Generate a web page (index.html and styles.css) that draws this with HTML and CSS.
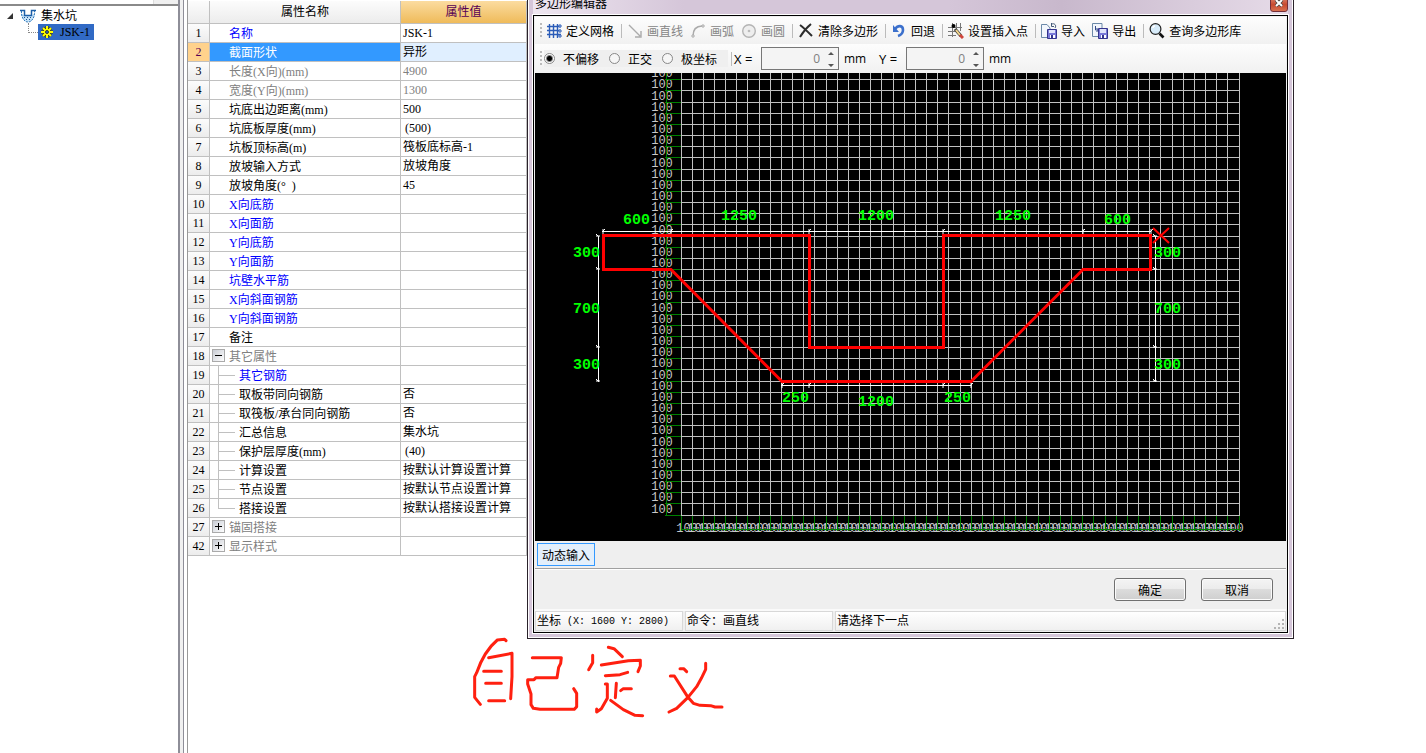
FILE: index.html
```html
<!DOCTYPE html>
<html lang="zh-CN">
<head>
    <meta charset="UTF-8">
    <meta name="viewport" content="width=device-width, initial-scale=1.0">
    <title>集水坑</title>
    <link rel="stylesheet" href="styles.css">
</head>
<body>
    <div class="workspace">
        <aside class="tree-pane">
            <div class="tree-tab"></div>
            <ul class="tree">
                <li class="tree-row">
                    <svg class="arrow" viewBox="0 0 8 8"><path d="M7 1V7H1Z" fill="#333"/></svg>
                    <svg class="node-icon" viewBox="0 0 18 16">
                        <path d="M2 5C2 9 5 14 9 14C13 14 16 9 16 5L12 8H6Z" fill="#c4e2f8"/>
                        <path d="M1 2.500H5.500V7.500H12.500V2.500H17" fill="none" stroke="#1c5fa8" stroke-width="1.5"/>
                        <path d="M2.500 3C2 9 5 14 9 14C13 14 16 9 15.500 3" fill="none" stroke="#2d76ba" stroke-dasharray="2 1"/>
                        <path d="M5 9.500h1M8 9.500h1M11 9.500h1M7 11.500h1M10 11.500h1" stroke="#1c4f90"/>
                    </svg>
                    <span>集水坑</span>
                </li>
                <li class="tree-row child">
                    <a class="selected" href="#">
                        <svg class="sun" viewBox="0 0 14 14">
                            <path d="M7 1V13M1 7H13M3 3L11 11M11 3L3 11" stroke="#3a3000" stroke-width="3"/>
                            <path d="M7 1V13M1 7H13M3 3L11 11M11 3L3 11" stroke="#ff0" stroke-width="2"/>
                            <circle cx="7" cy="7" r="3" fill="#ff0"/>
                            <circle cx="7" cy="7" r="1.5" fill="#316ac5" stroke="#333"/>
                        </svg>
                        <span>JSK-1</span>
                    </a>
                </li>
            </ul>
        </aside>
        <div class="splitter"></div>

        <table class="props">
            <thead>
                <tr><th class="num"></th><th class="name">属性名称</th><th class="value">属性值</th></tr>
            </thead>
            <tbody>
                <tr><th>1</th><td class="blue">名称</td><td>JSK-1</td></tr>
                <tr class="current"><th>2</th><td>截面形状</td><td>异形</td></tr>
                <tr class="gray"><th>3</th><td>长度(X向)(mm)</td><td>4900</td></tr>
                <tr class="gray"><th>4</th><td>宽度(Y向)(mm)</td><td>1300</td></tr>
                <tr><th>5</th><td>坑底出边距离(mm)</td><td>500</td></tr>
                <tr><th>6</th><td>坑底板厚度(mm)</td><td class="auto">(500)</td></tr>
                <tr><th>7</th><td>坑板顶标高(m)</td><td>筏板底标高-1</td></tr>
                <tr><th>8</th><td>放坡输入方式</td><td>放坡角度</td></tr>
                <tr><th>9</th><td>放坡角度(°&nbsp; )</td><td>45</td></tr>
                <tr><th>10</th><td class="blue">X向底筋</td><td></td></tr>
                <tr><th>11</th><td class="blue">X向面筋</td><td></td></tr>
                <tr><th>12</th><td class="blue">Y向底筋</td><td></td></tr>
                <tr><th>13</th><td class="blue">Y向面筋</td><td></td></tr>
                <tr><th>14</th><td class="blue">坑壁水平筋</td><td></td></tr>
                <tr><th>15</th><td class="blue">X向斜面钢筋</td><td></td></tr>
                <tr><th>16</th><td class="blue">Y向斜面钢筋</td><td></td></tr>
                <tr><th>17</th><td>备注</td><td></td></tr>
                <tr class="gray group"><th>18</th><td><button class="toggle open" aria-label="折叠"></button>其它属性</td><td></td></tr>
                <tr class="sub"><th>19</th><td class="blue">其它钢筋</td><td></td></tr>
                <tr class="sub"><th>20</th><td>取板带同向钢筋</td><td>否</td></tr>
                <tr class="sub"><th>21</th><td>取筏板/承台同向钢筋</td><td>否</td></tr>
                <tr class="sub"><th>22</th><td>汇总信息</td><td>集水坑</td></tr>
                <tr class="sub"><th>23</th><td>保护层厚度(mm)</td><td class="auto">(40)</td></tr>
                <tr class="sub"><th>24</th><td>计算设置</td><td>按默认计算设置计算</td></tr>
                <tr class="sub"><th>25</th><td>节点设置</td><td>按默认节点设置计算</td></tr>
                <tr class="sub last"><th>26</th><td>搭接设置</td><td>按默认搭接设置计算</td></tr>
                <tr class="gray group"><th>27</th><td><button class="toggle" aria-label="展开"></button>锚固搭接</td><td></td></tr>
                <tr class="gray group"><th>42</th><td><button class="toggle" aria-label="展开"></button>显示样式</td><td></td></tr>
            </tbody>
        </table>

        <section class="dialog">
            <header class="titlebar">
                <span>多边形编辑器</span>
                <button class="close" aria-label="关闭">
                    <svg viewBox="0 0 8 8"><path d="M1 1L7 7M7 1L1 7" stroke="#444" stroke-width="3.4"/><path d="M1 1L7 7M7 1L1 7" stroke="#fff" stroke-width="2"/></svg>
                </button>
            </header>
            <div class="dialog-body">
                <div class="toolbar">
                    <i class="grip"></i>
                    <button class="tool">
                        <svg viewBox="0 0 16 16"><path d="M3.5 1V15M7.5 1V15M11.5 1V15M1 3.5H15M1 7.5H15M1 11.5H15" stroke="#2b5cb8" stroke-width="1.4" fill="none"/><path d="M13 2h2v2h-2zM13 7h2v2h-2zM13 12h2v2h-2z" fill="#fff" stroke="#2b5cb8"/></svg>
                        定义网格
                    </button>
                    <i class="sep"></i>
                    <button class="tool" disabled>
                        <svg viewBox="0 0 16 16"><path d="M2 2L13 13M14 8V14H8" fill="none" stroke="#aaa" stroke-width="1.4"/></svg>
                        画直线
                    </button>
                    <button class="tool" disabled>
                        <svg viewBox="0 0 16 16"><path d="M3 13C3 7 6 3 12 3" fill="none" stroke="#aaa" stroke-width="1.4"/><path d="M2 12h2v2h-2zM12 2h2v2h-2z" fill="#fff" stroke="#aaa"/></svg>
                        画弧
                    </button>
                    <button class="tool" disabled>
                        <svg viewBox="0 0 16 16"><circle cx="8" cy="8" r="6.3" fill="#eee" stroke="#b4b4b4" stroke-width="1.4"/><circle cx="8" cy="8" r="1.3" fill="#bbb"/></svg>
                        画圆
                    </button>
                    <i class="sep"></i>
                    <button class="tool">
                        <svg viewBox="0 0 16 16"><path d="M2 2C6 5 10 9 14 13M13 1C8 5 5 9 2 14" fill="none" stroke="#2c2c2c" stroke-width="2"/></svg>
                        清除多边形
                    </button>
                    <i class="sep"></i>
                    <button class="tool">
                        <svg viewBox="0 0 16 16"><path d="M4 6C7 2 12 2 12 7C12 10 10 12 7 13" fill="none" stroke="#3c70cc" stroke-width="2.6"/><path d="M2 2V9H8Z" fill="#3c70cc"/></svg>
                        回退
                    </button>
                    <i class="sep"></i>
                    <button class="tool">
                        <svg viewBox="0 0 16 16"><path d="M4.5 0V14M8.500 0V9M12.500 0V8M0 4.500H14M0 8.500H9M0 12.500H8" stroke="#777" fill="none"/><circle cx="5.500" cy="3" r="2" fill="#000"/><path d="M7 6L13 13" stroke="#444" stroke-width="3.400"/><path d="M8 7L12 12" stroke="#f4d58a" stroke-width="2"/><path d="M12 12L15 15" stroke="#d0453c" stroke-width="3"/></svg>
                        设置插入点
                    </button>
                    <i class="sep"></i>
                    <button class="tool">
                        <svg viewBox="0 0 16 16"><path d="M.5 1.500H6L9 5V14.500H.5Z" fill="#f2f6fc" stroke="#6c89a8"/><path d="M11 1C13 0 16 2 14 5M10.500 0V3.500H13" fill="none" stroke="#445a78"/><path d="M6.500 6.500H15.500V15.500H6.500Z" fill="#7a7ad8" stroke="#34348c"/><path d="M8 7h6v3H8z" fill="#dfe3fa"/><path d="M9 12h5v3H9z" fill="#fff"/><path d="M10 12h2v3h-2z" fill="#34348c"/></svg>
                        导入
                    </button>
                    <button class="tool">
                        <svg viewBox="0 0 16 16"><path d="M.5 .5H10V13.500H.5Z" fill="#f2f6fc" stroke="#6c89a8"/><path d="M3.500 3V7H6M4.500 5L6.500 7L4.500 9" fill="none" stroke="#334a88"/><path d="M6.500 5.500H15.500V15.500H6.500Z" fill="#7a7ad8" stroke="#34348c"/><path d="M8 6h6v4H8z" fill="#dfe3fa"/><path d="M9 12h5v3H9z" fill="#fff"/><path d="M10 12h2v3h-2z" fill="#34348c"/></svg>
                        导出
                    </button>
                    <i class="sep"></i>
                    <button class="tool">
                        <svg viewBox="0 0 16 16"><circle cx="6.500" cy="6" r="5.400" fill="#d8ecfa" stroke="#222" stroke-width="1.200"/><path d="M4 5C4 4 5 3 6 3" stroke="#fff" fill="none" stroke-width="1.500"/><path d="M10.500 10.500L14.500 14.500" stroke="#111" stroke-width="2.600"/></svg>
                        查询多边形库
                    </button>
                </div>

                <div class="toolbar offset-bar">
                    <i class="grip"></i>
                    <div class="modes">
                        <label><input type="radio" name="offset" checked>不偏移</label>
                        <label><input type="radio" name="offset">正交</label>
                        <label><input type="radio" name="offset">极坐标</label>
                    </div>
                    <i class="sep"></i>
                    <label class="axis" for="offsetX">X =</label>
                    <div class="spin">
                        <input type="text" id="offsetX" value="0" disabled>
                        <svg viewBox="0 0 8 16"><path d="M1 4L4 1L7 4ZM1 13L4 16L7 13Z" fill="#555"/></svg>
                    </div>
                    <span class="unit">mm</span>
                    <label class="axis" for="offsetY">Y =</label>
                    <div class="spin">
                        <input type="text" id="offsetY" value="0" disabled>
                        <svg viewBox="0 0 8 16"><path d="M1 4L4 1L7 4ZM1 13L4 16L7 13Z" fill="#555"/></svg>
                    </div>
                    <span class="unit">mm</span>
                </div>

                <svg class="canvas" viewBox="535 73 751 468">
                    <g id="grid"></g>
                    <path class="dim-line" d="M603 231.500H1151M598.500 236V381M1155.500 236V381M782 385.500H971"/>
                    <g id="ticks"></g>
                    <g class="dim-text">
                        <text x="623" y="224">600</text>
                        <text x="721" y="220">1250</text>
                        <text x="858" y="220">1200</text>
                        <text x="995" y="220">1250</text>
                        <text x="1104" y="224">600</text>
                        <text x="573" y="257">300</text>
                        <text x="573" y="313">700</text>
                        <text x="573" y="369">300</text>
                        <text x="1154" y="257">300</text>
                        <text x="1154" y="313">700</text>
                        <text x="1154" y="369">300</text>
                        <text x="782" y="402">250</text>
                        <text x="858" y="406">1200</text>
                        <text x="944" y="402">250</text>
                    </g>
                    <path class="shape" d="M603.500 235.500H809.500V347.500H943.500V235.500H1150.500V269.500H1083L971 381.500H782L671 269.500H603.500Z"/>
                    <path class="cursor" d="M1153 228L1169 243M1169 228L1153 243"/>
                </svg>

                <div class="input-bar"><button class="dynamic">动态输入</button></div>
                <div class="actions">
                    <button>确定</button>
                    <button>取消</button>
                </div>
                <footer class="status">
                    <div class="cell">坐标<span class="coords">(X: 1600 Y: 2800)</span></div>
                    <div class="cell">命令：画直线</div>
                    <div class="cell wide">请选择下一点
                        <svg class="resize" viewBox="0 0 12 12"><path d="M9 1h2v2H9zM5 5h2v2H5zM9 5h2v2H9zM1 9h2v2H1zM5 9h2v2H5zM9 9h2v2H9z" fill="#b4b4b4"/></svg>
                    </div>
                </footer>
            </div>
        </section>
    </div>

    <!-- handwritten note: 自己定义 -->
    <svg class="note" viewBox="0 0 840 300">
        <path d="M138 32L134 28L112 30C88 50 66 82 50 128L44 140V202L61 223M86 83L156 70V140L152 206M71 124H124M77 160H124M86 212H134"/>
        <path d="M217 83H304L302 100L296 112L291 143H228L222 149H203V162L213 192V224L220 235L240 238H343L350 230V190L341 176"/>
        <path d="M398 76V98L386 119M445 52L462 56L487 80M424 105L505 92L541 91V108L534 125M436 137L480 134L503 127M436 162H442V205L424 236L410 246V237M469 160L466 203M482 182L490 176H514M452 211L490 239L525 256L548 257"/>
        <path d="M660 116L671 116L680 125M631 138L643 138L684 202L700 220L720 226L752 227L765 231H786M737 100V118L724 145L710 170L684 202L650 235L627 246"/>
    </svg>

    <script>
        // grid pitch in px, one cell = 100mm
        const PITCH = 11.16;
        const LEFT = 681, RIGHT = 1239, TOP = 73, BOTTOM = 515;
        const snap = v => Math.floor(v) + 0.5;

        let grid = '', axis = '', labels = '';
        for (let i = 0; i <= 50; i++) {
            const x = snap(LEFT + i * PITCH);
            grid += `M${x} ${TOP}V${BOTTOM}`;
            axis += `M${x} ${BOTTOM + 1}V531`;
            if (i < 50) labels += `<text x="${Math.round(x + 5)}" y="532">100</text>`;
        }
        for (let i = 0; i <= 39; i++) {
            const y = snap(BOTTOM - i * PITCH);
            grid += `M${LEFT} ${y}H${RIGHT + 1}`;
            axis += `M665 ${y}H${LEFT}`;
            labels += `<text x="662" y="${Math.floor(y - 2)}">100</text>`;
        }
        axis += `M666.5 ${TOP}V${BOTTOM}M${LEFT} 529.5H1241`;
        document.getElementById('grid').innerHTML =
            `<path class="grid-line" d="${grid}"/><g class="axis-text">${labels}</g><path class="axis-line" d="${axis}"/>`;

        // small arrow ticks on the dimension lines
        let ticks = '';
        [603, 671, 809, 943, 1083, 1151].forEach(x => ticks += `M${x} 229V234M${x - 1} 232L${x + 2} 229`);
        [782, 809, 943, 971].forEach(x => ticks += `M${x} 383V388M${x - 1} 386L${x + 2} 383`);
        [236, 269, 347, 381].forEach(y => {
            [598, 1155].forEach(x => ticks += `M${x - 2} ${y}H${x + 2}M${x - 2} ${y - 2}L${x + 1} ${y + 1}`);
        });
        document.getElementById('ticks').innerHTML = `<path class="dim-line" d="${ticks}"/>`;
    </script>
</body>
</html>
```

FILE: styles.css
```css
* {
    box-sizing: border-box;
}
body {
    margin: 0;
    min-height: 100vh;
    overflow: hidden;
    background: #fff;
    color: #000;
    font: 12px/18px "Liberation Serif", "Noto Sans CJK SC", serif;
}
button, input {
    font: inherit;
    color: inherit;
}
button {
    padding: 0;
    border: none;
    background: none;
}
.workspace {
    display: flex;
    height: 100vh;
    align-items: flex-start;
}

/* component tree */
.tree-pane {
    flex: 0 0 180px;
    height: 100%;
    border-right: 2px solid #8e8e98;
}
.tree-tab {
    height: 6px;
    border-bottom: 2px solid #8a8a8a;
    background: linear-gradient(90deg, #fff 153px, #ddd 153px, #ddd 154px, #f0f0f0 154px);
}
.tree {
    list-style: none;
    margin: 0;
    padding: 2px 0 0 6px;
}
.tree-row {
    display: flex;
    align-items: center;
    height: 16px;
}
.arrow {
    width: 8px;
    height: 8px;
    margin-right: 5px;
}
.node-icon {
    width: 18px;
    height: 16px;
    margin-right: 4px;
}
.child::before {
    content: "";
    width: 9px;
    height: 9px;
    margin: 0 0 8px 22px;
    border-left: 1px dotted #888;
    border-bottom: 1px dotted #888;
}
.selected {
    display: flex;
    align-items: center;
    gap: 6px;
    height: 16px;
    padding: 0 4px 0 2px;
    background: #316ac5;
    color: #000;
    text-decoration: none;
}
.sun {
    width: 14px;
    height: 14px;
}
.splitter {
    flex: 0 0 8px;
    height: 100%;
    border-right: 1px solid #999;
    background: linear-gradient(90deg, #f0f0f0 3px, #8e8e98 3px, #8e8e98 4px, #fff 4px);
}

/* property grid */
.props {
    flex: 0 0 339px;
    table-layout: fixed;
    border-collapse: separate;
    border-spacing: 0;
    border-top: 1px solid #fff;
}
.props th, .props td {
    height: 19px;
    padding: 0 0 0 2px;
    border: 0 solid silver;
    border-width: 0 1px 1px 0;
    font-weight: normal;
    line-height: 16px;
    white-space: nowrap;
    text-align: left;
}
.props th {
    padding: 0;
    background: linear-gradient(#fcfcfc, #ececec);
    text-align: center;
}
.props thead th {
    height: 23px;
}
.props .num {
    width: 22px;
}
.props .name {
    width: 191px;
}
.props thead .value {
    background: linear-gradient(#fbdca0, #efbb5a);
    color: #550055;
}
.props td:nth-child(2) {
    padding-top: 2px;
    padding-left: 19px;
}
.props .blue {
    color: #00f;
}
.props .gray td {
    color: #808080;
}
.props .auto {
    padding-left: 4px;
}
.props .current th {
    background: #ffd28c;
    color: #550055;
}
.props .current td {
    background: #e0efff;
}
.props .current td:nth-child(2) {
    background: #39f;
    color: #fff;
}
.props .group td:nth-child(2) {
    padding-left: 2px;
}
.toggle {
    width: 13px;
    height: 13px;
    margin-right: 4px;
    border: 1px solid #aaa;
    vertical-align: top;
    background:
        linear-gradient(#000, #000) center / 7px 1px no-repeat,
        linear-gradient(#000, #000) center / 1px 7px no-repeat,
        linear-gradient(135deg, #c8ccd4, #fff);
}
.toggle.open {
    background:
        linear-gradient(#000, #000) center / 7px 1px no-repeat,
        linear-gradient(135deg, #c8ccd4, #fff);
}
.props .sub td:nth-child(2) {
    padding-left: 29px;
    background:
        linear-gradient(silver, silver) 8px 0 / 1px 100% no-repeat,
        linear-gradient(silver, silver) 8px 9px / 17px 1px no-repeat;
}
.props .last td:nth-child(2) {
    background:
        linear-gradient(silver, silver) 8px 0 / 1px 9px no-repeat,
        linear-gradient(silver, silver) 8px 9px / 17px 1px no-repeat;
}

/* polygon editor window */
.dialog {
    flex: 0 1 767px;
    min-width: 0;
    margin-top: -15px;
    padding: 5px;
    border: 1px solid #2a222a;
    background: #d5c6d9;
    box-shadow: inset 0 0 0 1px #fff;
    font-family: "Noto Sans CJK SC", sans-serif;
}
.titlebar {
    display: flex;
    justify-content: space-between;
    align-items: center;
    height: 24px;
    padding-left: 2px;
    background: linear-gradient(90deg, #eee6f0, #d5c6d9 20%, #d5c6d9 55%, #c8b8cc 70%, #e6dbe8);
}
.close {
    display: flex;
    align-items: center;
    justify-content: center;
    width: 18px;
    height: 18px;
    border: 1px solid #74303a;
    border-radius: 0 0 3px 3px;
    background: linear-gradient(#e49a84, #c84a30 60%, #d87050);
}
.close svg {
    width: 8px;
    height: 8px;
}
.dialog-body {
    padding: 1px;
    border: 1px solid #000;
    outline: 1px solid #fff;
    background: #efefef;
}
.toolbar {
    display: flex;
    align-items: center;
    height: 27px;
    padding-left: 5px;
    background: linear-gradient(#fdfdfd, #f1f1f1);
    white-space: nowrap;
}
.grip {
    width: 2px;
    height: 15px;
    margin-right: 4px;
    background: repeating-linear-gradient(#bbb 0 2px, transparent 2px 4px);
}
.tool {
    display: flex;
    align-items: center;
    gap: 4px;
    padding-right: 7px;
}
.tool:disabled {
    color: #858585;
}
.tool svg {
    width: 16px;
    height: 16px;
}
.sep {
    width: 1px;
    height: 14px;
    margin-right: 5px;
    background: #bbb;
}
.offset-bar {
    height: 29px;
}
.offset-bar .grip {
    margin-right: 2px;
}
.offset-bar .sep {
    margin: 0 2px 0 3px;
}
.modes {
    display: flex;
    align-items: center;
    gap: 10px;
    width: 184px;
    height: 17px;
    background: #efefef;
}
.modes label {
    display: flex;
    align-items: center;
    gap: 8px;
}
.modes input {
    appearance: none;
    width: 11px;
    height: 11px;
    margin: 0;
    border: 1px solid #888;
    border-radius: 50%;
    background: #f6f6f6;
}
.modes input:checked {
    background: radial-gradient(circle, #000 2px, #fff 4px);
}
.axis, .unit {
    font-family: "Open Sans", sans-serif;
}
.axis {
    width: 27px;
    font-size: 13px;
}
.unit {
    width: 40px;
    padding-left: 5px;
}
.spin {
    display: flex;
    align-items: center;
    width: 78px;
    height: 23px;
    padding-right: 3px;
    border: 1px solid #777;
    background: #f4f4f4;
}
.spin input {
    flex: 1;
    min-width: 0;
    padding: 0 7px 0 0;
    border: none;
    background: none;
    color: #808080;
    font-family: "Open Sans", sans-serif;
    text-align: right;
}
.spin svg {
    width: 8px;
    height: 16px;
}

/* drawing area */
.canvas {
    display: block;
    width: 100%;
    background: #000;
}
.canvas path {
    fill: none;
}
.grid-line {
    stroke: silver;
}
.axis-line {
    stroke: green;
}
.axis-text {
    fill: #c8c8c8;
    font: 12px "Liberation Mono", monospace;
    text-anchor: middle;
}
.dim-line {
    stroke: #fff;
}
.dim-text {
    fill: #0f0;
    font: bold 15px "Liberation Mono", monospace;
}
.canvas .shape {
    stroke: red;
    stroke-width: 3;
}
.canvas .cursor {
    stroke: red;
    stroke-width: 2;
}

.input-bar {
    height: 28px;
    padding: 2px;
    border-bottom: 1px solid #a0a0a0;
}
.dynamic {
    width: 58px;
    height: 23px;
    border: 1px solid #39f;
    background: #e3effb;
}
.actions {
    display: flex;
    justify-content: flex-end;
    gap: 15px;
    height: 42px;
    padding: 8px 13px;
    border-top: 1px solid #fff;
    border-bottom: 2px solid #fafafa;
}
.actions button {
    width: 72px;
    height: 23px;
    border: 1px solid #707070;
    border-radius: 3px;
    background: linear-gradient(#f4f4f4, #ebebeb 50%, #dcdcdc 50%, #cfcfcf);
    box-shadow: inset 0 0 0 1px #fbfbfb;
}
.status {
    display: flex;
    gap: 2px;
    height: 20px;
    font-family: "Liberation Serif", "Noto Sans CJK SC", serif;
}
.cell {
    display: flex;
    align-items: center;
    flex: 0 0 148px;
    padding-left: 1px;
    border: 1px solid #d8d8d8;
    background: linear-gradient(#fff, #f0f0f0);
    white-space: nowrap;
}
.cell.wide {
    flex: 1;
    justify-content: space-between;
}
.coords {
    margin-left: 6px;
    font: 10px "Liberation Mono", monospace;
}
.resize {
    width: 12px;
    height: 12px;
    align-self: flex-end;
}

.note {
    position: absolute;
    left: 460px;
    top: 630px;
    width: 280px;
    height: 100px;
    fill: none;
    stroke: #ff2010;
    stroke-width: 9;
    stroke-linecap: round;
    stroke-linejoin: round;
}
```
